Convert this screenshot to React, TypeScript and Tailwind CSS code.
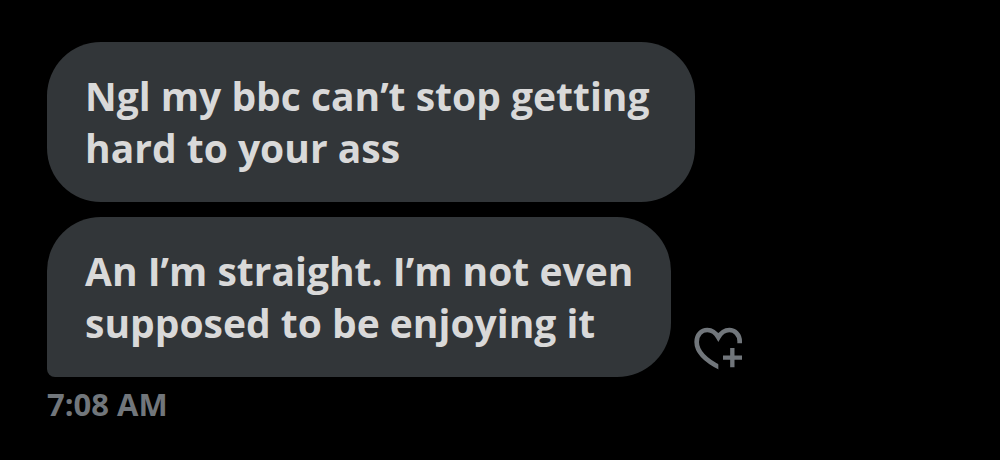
import React from 'react';

interface Message {
  id: number;
  text: string;
  bubbleClass: string;
  canReact?: boolean;
}

const messages: Message[] = [
  {
    id: 1,
    text: "Ngl my bbc can’t stop getting hard to your ass",
    bubbleClass: "max-w-[648px] rounded-[54px]",
  },
  {
    id: 2,
    text: "An I’m straight. I’m not even supposed to be enjoying it",
    bubbleClass: "max-w-[624px] rounded-[54px] rounded-bl-lg",
    canReact: true,
  },
];

function HeartPlusIcon() {
  return (
    <svg viewBox="0 0 144 132" className="w-12 h-11" fill="none" stroke="currentColor" aria-hidden="true">
      <clipPath id="heart-cut">
        <path d="M0 0H144V49H73V132H0Z" />
      </clipPath>
      <path
        clipPath="url(#heart-cut)"
        strokeWidth="14"
        d="M137 52V43C137 22 122 9 106 9C92 9 81 17 73 31C65 17 54 9 40 9C22 9 8 23 8 45C8 76 34 100 80 123"
      />
      <path strokeWidth="13" d="M115 63V121M87 92H144" />
    </svg>
  );
}

export default function App() {
  return (
    <main className="min-h-screen bg-black px-[47px] pt-[42px] pb-6 font-['Open_Sans',sans-serif] font-bold">
      <div className="flex flex-col gap-[15px]">
        {messages.map((message) => (
          <div key={message.id} className="flex items-end gap-[23px]">
            <p className={`bg-[#323639] text-[#d9d9d9] text-[39px] leading-[52px] pl-[38px] pr-9 py-7 ${message.bubbleClass}`}>
              {message.text}
            </p>
            {message.canReact && (
              <button type="button" aria-label="Add reaction" className="shrink-0 mb-[6px] text-[#71767b]">
                <HeartPlusIcon />
              </button>
            )}
          </div>
        ))}
      </div>
      <time className="block mt-[7px] text-[31px] leading-10 text-[#71767b]">7:08 AM</time>
    </main>
  );
}
